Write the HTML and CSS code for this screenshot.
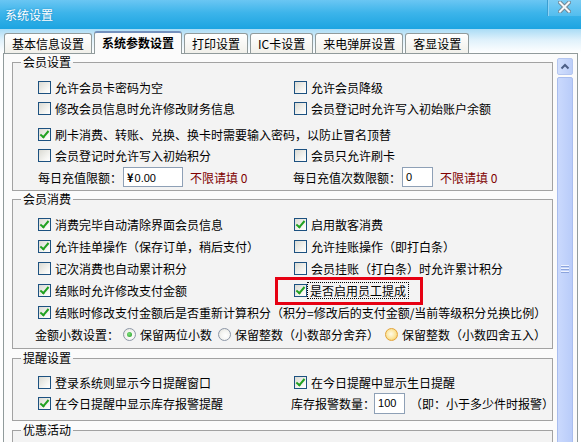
FILE: index.html
```html
<!DOCTYPE html>
<html lang="zh-CN">
<head>
<meta charset="utf-8">
<title>系统设置</title>
<link rel="stylesheet" href="styles.css">
</head>
<body>
<div class="window">
  <div class="titlebar">
    <span class="title">系统设置</span>
    <span class="spacer"></span>
    <span class="ctl">
      <svg class="xicon" width="13" height="12" viewBox="0 0 13 12">
        <path d="M2 1.5 L11 10.5 M11 1.5 L2 10.5" stroke="#6f8796" stroke-width="4" stroke-linecap="square" fill="none"/>
        <path d="M2 1.5 L11 10.5 M11 1.5 L2 10.5" stroke="#f4f7f8" stroke-width="2" stroke-linecap="square" fill="none"/>
      </svg>
    </span>
  </div>
  <div class="tabbar">
    <div class="tab">基本信息设置</div>
    <div class="tab active">系统参数设置</div>
    <div class="tab">打印设置</div>
    <div class="tab">IC卡设置</div>
    <div class="tab">来电弹屏设置</div>
    <div class="tab">客显设置</div>
  </div>
  <div class="panel">
    <div class="groups">
      <fieldset class="group g1">
        <legend>会员设置</legend>
        <div class="rows">
          <div class="row">
            <span class="opt"><span class="cb"></span>允许会员卡密码为空</span>
            <span class="opt"><span class="cb"></span>允许会员降级</span>
          </div>
          <div class="row h21">
            <span class="opt"><span class="cb"></span>修改会员信息时允许修改财务信息</span>
            <span class="opt"><span class="cb"></span>会员登记时允许写入初始账户余额</span>
          </div>
          <div class="row full gap4">
            <span class="opt"><span class="cb on"></span>刷卡消费、转账、兑换、换卡时需要输入密码，以防止冒名顶替</span>
          </div>
          <div class="row h21">
            <span class="opt"><span class="cb"></span>会员登记时允许写入初始积分</span>
            <span class="opt"><span class="cb"></span>会员只允许刷卡</span>
          </div>
          <div class="row">
            <span class="field"><span>每日充值限额：</span><span class="txt w60"><b class="yen">¥</b>0.00</span><span class="hint">不限请填 0</span></span>
            <span class="field shift1"><span>每日充值次数限额：</span><span class="txt w31">0</span><span class="hint">不限请填 0</span></span>
          </div>
        </div>
      </fieldset>

      <fieldset class="group g2">
        <legend>会员消费</legend>
        <div class="rows">
          <div class="row">
            <span class="opt"><span class="cb on"></span>消费完毕自动清除界面会员信息</span>
            <span class="opt"><span class="cb on"></span>启用散客消费</span>
          </div>
          <div class="row">
            <span class="opt"><span class="cb on"></span>允许挂单操作（保存订单，稍后支付）</span>
            <span class="opt"><span class="cb"></span>允许挂账操作（即打白条）</span>
          </div>
          <div class="row">
            <span class="opt"><span class="cb"></span>记次消费也自动累计积分</span>
            <span class="opt"><span class="cb"></span>会员挂账（打白条）时允许累计积分</span>
          </div>
          <div class="row marked">
            <span class="opt"><span class="cb on"></span>结账时允许修改支付金额</span>
            <span class="opt"><span class="cb on tight"></span><span class="focus">是否启用员工提成</span></span>
            <span class="mark"></span>
          </div>
          <div class="row full">
            <span class="opt"><span class="cb on"></span>结账时修改支付金额后是否重新计算积分（积分=修改后的支付金额/当前等级积分兑换比例）</span>
          </div>
          <div class="row full">
            <span class="field shift3">
              <span>金额小数设置：</span>
              <span class="radio first"><span class="rb on"></span>保留两位小数</span>
              <span class="radio"><span class="rb"></span>保留整数（小数部分舍弃）</span>
              <span class="radio"><span class="rb hot"></span>保留整数（小数四舍五入）</span>
            </span>
          </div>
        </div>
      </fieldset>

      <fieldset class="group g3">
        <legend>提醒设置</legend>
        <div class="rows">
          <div class="row">
            <span class="opt"><span class="cb"></span>登录系统则显示今日提醒窗口</span>
            <span class="opt"><span class="cb on"></span>在今日提醒中显示生日提醒</span>
          </div>
          <div class="row">
            <span class="opt"><span class="cb on"></span>在今日提醒中显示库存报警提醒</span>
            <span class="field shift3"><span>库存报警数量：</span><span class="txt w31 h21 pull1">100</span><span class="note">（即：小于多少件时报警）</span></span>
          </div>
        </div>
      </fieldset>

      <fieldset class="group g4">
        <legend>优惠活动</legend>
        <div class="rows"></div>
      </fieldset>
    </div>
    <div class="scrollbar">
      <div class="sb-up">
        <svg width="14" height="15" viewBox="0 0 14 15"><path d="M3.5 9.5 L7 6 L10.5 9.5" fill="none" stroke="#4d5f86" stroke-width="2"/></svg>
      </div>
      <div class="sb-thumb">
        <svg class="grip" width="8" height="8" viewBox="0 0 8 8">
          <rect x="0" y="0" width="8" height="1" fill="#eef3fe"/>
          <rect x="0" y="1" width="8" height="1" fill="#8ca4dc"/>
          <rect x="0" y="3" width="8" height="1" fill="#eef3fe"/>
          <rect x="0" y="4" width="8" height="1" fill="#8ca4dc"/>
          <rect x="0" y="6" width="8" height="1" fill="#eef3fe"/>
          <rect x="0" y="7" width="8" height="1" fill="#8ca4dc"/>
        </svg>
      </div>
    </div>
  </div>
</div>
</body>
</html>
```

FILE: styles.css
```css
* { box-sizing: border-box; }
html, body { margin: 0; padding: 0; }
body {
  width: 581px;
  height: 442px;
  overflow: hidden;
  background: #ffffff;
  font-family: "Noto Sans CJK SC", "Noto Sans", sans-serif;
  font-size: 12px;
  color: #000;
}
.window {
  width: 581px;
  height: 442px;
  overflow: hidden;
}

/* title bar */
.titlebar {
  height: 29px;
  display: flex;
  align-items: flex-start;
  background: linear-gradient(#6ac6f3 0%, #3cb4ea 45%, #1ca4e1 100%);
}
.title {
  color: #ffffff;
  margin-left: 5px;
  line-height: 29px;
  text-shadow: 0 0 2px #1b84bf;
}
.spacer { flex: 1; }
.ctl {
  width: 34px;
  height: 16px;
  border-left: 1px solid #3a9ed2;
  box-shadow: inset 1px 0 0 #8fd3f4;
  background: linear-gradient(#7ccdf4, #52bdee);
  display: flex;
  justify-content: center;
  align-items: flex-start;
  padding-top: 1px;
}

/* tabs */
.tabbar {
  height: 24px;
  display: flex;
  align-items: flex-end;
  gap: 2px;
  padding-left: 4px;
  position: relative;
  z-index: 1;
  background: linear-gradient(#aadcf6 0%, #dff1fb 45%, #ffffff 100%);
}
.tab {
  height: 20px;
  line-height: 19px;
  padding: 0 7px;
  border: 1px solid #919b9c;
  border-bottom: 0;
  border-radius: 3px 3px 0 0;
  background: linear-gradient(#ffffff, #f1f0ea);
  white-space: nowrap;
}
.tab.active {
  height: 23px;
  margin-bottom: -1px;
  line-height: 20px;
  font-weight: bold;
  border-top: 2px solid #7391bd;
  background: #fbfbfb;
}

/* panel */
.panel {
  margin: 0 3px;
  height: 400px;
  border: 1px solid #919b9c;
  background: #fbfbfb;
  display: flex;
  align-items: flex-start;
  padding: 1px 3px 0 8px;
}
.groups { width: 541px; flex: none; }

.group {
  margin: 2px 0 0 0;
  padding: 7px 0 3px 0;
  border: 1px solid #a2a2a2;
  background: #f3f3f3;
  min-width: 0;
}
.group.g1 { margin-top: 0; padding-bottom: 2px; }
.group.g2 { margin-top: 1px; }
.group.g3 { padding-bottom: 6px; }
.group.g4 { height: 60px; }
.group legend {
  padding: 0 2px;
  margin-left: 8px;
  line-height: 14px;
}
.rows { padding-left: 25px; }

.row {
  display: grid;
  grid-template-columns: 256px auto;
  height: 22px;
  align-items: center;
  white-space: nowrap;
}
.row.h21, .g3 .row { height: 21px; }
.row.gap4 { margin-top: 4px; }
.row.full { display: flex; }
.row.marked { position: relative; }

.opt, .field { display: flex; align-items: center; }
.field.shift1 { margin-left: -1px; }
.field.shift3 { margin-left: -3px; }

/* checkbox */
.cb {
  width: 13px;
  height: 13px;
  flex: none;
  margin-right: 4px;
  border: 1px solid #1c5180;
  background: linear-gradient(135deg, #dadad3 0%, #f6f6f3 70%, #ffffff 100%);
  position: relative;
}
.cb.on::after {
  content: "";
  position: absolute;
  left: 3px;
  top: 0px;
  width: 3px;
  height: 7px;
  border-right: 2px solid #21a121;
  border-bottom: 2px solid #21a121;
  transform: rotate(40deg);
}
.cb.tight { margin-right: 1px; }
.focus {
  outline: 1px dotted #000;
  padding: 0 2px;
  line-height: 15px;
}

/* red annotation */
.mark {
  position: absolute;
  left: 237px;
  top: -2px;
  width: 148px;
  height: 28px;
  border: 3px solid #e60012;
}

/* radios */
.radio { display: flex; align-items: center; margin-left: 6px; }
.radio.first { margin-left: 4px; }
.rb {
  width: 13px;
  height: 13px;
  flex: none;
  margin-right: 4px;
  border-radius: 50%;
  border: 1px solid #8c96a6;
  background: radial-gradient(circle at 60% 60%, #ffffff 0%, #f4f4f1 50%, #dcdcd6 100%);
  position: relative;
}
.rb.on::after {
  content: "";
  position: absolute;
  left: 3px;
  top: 3px;
  width: 5px;
  height: 5px;
  border-radius: 50%;
  background: radial-gradient(circle at 40% 40%, #7fe07f, #1f9a1f);
}
.rb.hot {
  border-color: #e3a43a;
  background: radial-gradient(circle at 45% 45%, #fffbe9 0%, #fbe49a 55%, #f2b742 100%);
}

/* text boxes */
.txt {
  height: 20px;
  margin-left: 1px;
  border: 1px solid #8ea0b6;
  background: #ffffff;
  font-family: "Liberation Sans", Arial, sans-serif;
  font-size: 11px;
  line-height: 18px;
  padding-left: 3px;
}
.txt.w60 { width: 60px; }
.txt.w31 { width: 31px; }
.txt.h21 { height: 21px; line-height: 19px; }
.txt.pull1 { margin-left: -1px; }
.yen { font-weight: bold; font-family: "Noto Sans CJK SC", sans-serif; margin-right: 1px; }
.hint { color: #800000; margin-left: 7px; }
.note { margin-left: 5px; }

/* scrollbar */
.scrollbar {
  width: 16px;
  flex: none;
  margin-left: 4px;
  margin-top: 3px;
  display: flex;
  flex-direction: column;
  gap: 2px;
}
.sb-up {
  height: 17px;
  border: 1px solid #b4c6f0;
  border-radius: 2px;
  background: linear-gradient(90deg, #d2dffd, #bccef8);
  display: flex;
  justify-content: center;
  align-items: center;
}
.sb-thumb {
  height: 384px;
  border: 1px solid #a9bdee;
  border-radius: 2px;
  background: linear-gradient(90deg, #cad9fd, #b9ccf9);
  display: flex;
  justify-content: center;
  align-items: center;
}
```
